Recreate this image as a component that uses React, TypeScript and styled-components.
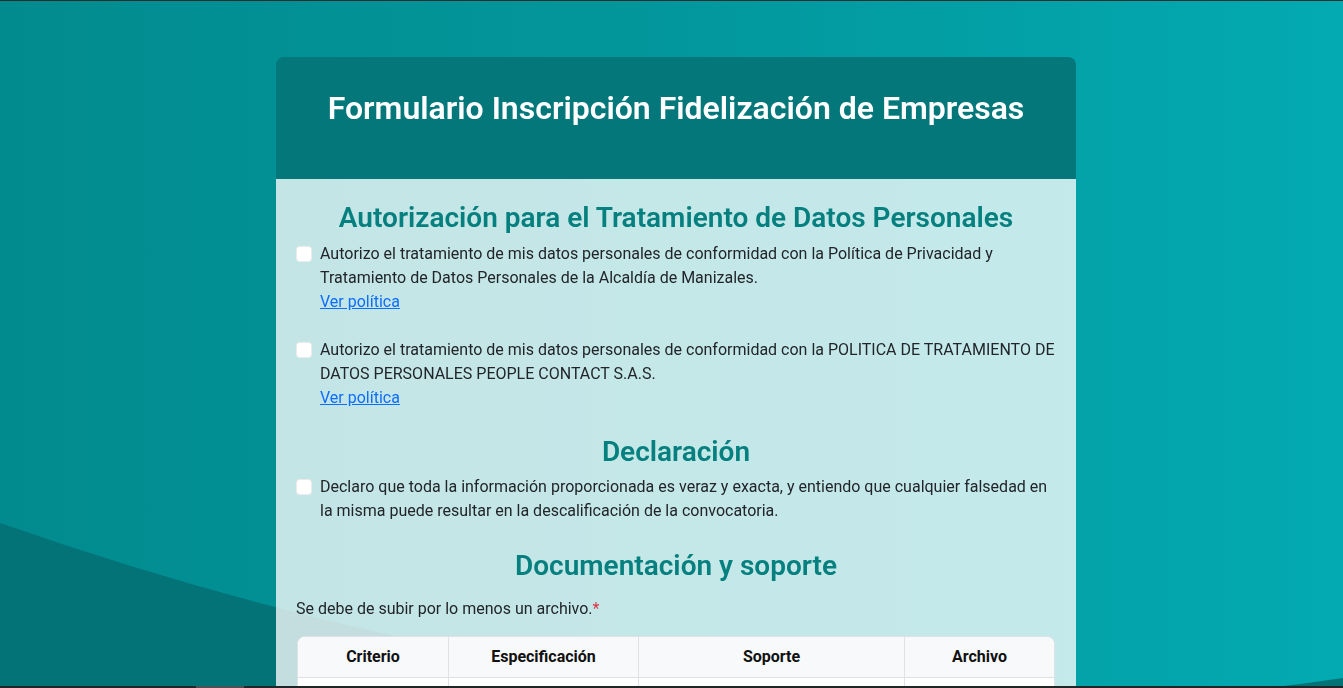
import React from "react";
import styled, { createGlobalStyle } from "styled-components";

const GlobalStyle = createGlobalStyle`
  *, *::before, *::after { box-sizing: border-box; }
  html, body { margin: 0; padding: 0; }
  body {
    font-family: Roboto, "Noto Sans", Arial, sans-serif;
    font-size: 16px;
    line-height: 1.5;
    color: #212529;
    background: linear-gradient(90deg, #028b8f 0%, #02979c 50%, #03aab1 100%);
    min-height: 100vh;
  }
`;

const Page = styled.div`
  position: relative;
  z-index: 1;
  display: flex;
  justify-content: center;
  padding: 56px 0 40px 9px;
  border-top: 1px solid #2b2d2e;
  min-height: 100vh;
`;

const Wave = styled.svg`
  position: fixed;
  inset: 0;
  width: 100%;
  height: 100%;
  z-index: 0;
  pointer-events: none;
`;

const BottomBar = styled.div`
  position: fixed;
  left: 0;
  right: 0;
  bottom: 0;
  height: 2px;
  background: #222526;
  z-index: 5;
`;

const BarThumb = styled.div`
  position: absolute;
  left: 196px;
  width: 48px;
  top: 0;
  bottom: 0;
  background: #4e5152;
`;

const Card = styled.div`
  width: 800px;
  border-radius: 8px;
  overflow: hidden;
  display: flex;
  flex-direction: column;
`;

const Header = styled.header`
  background: #04777b;
  padding: 32px 20px 52px;
`;

const Title = styled.h1`
  margin: 0;
  color: #ffffff;
  font-size: 32px;
  font-weight: 600;
  line-height: 38px;
  text-align: center;
`;

const Body = styled.main`
  display: flex;
  flex-direction: column;
  background: rgba(255, 255, 255, 0.77);
  padding: 21px 20px 40px;
  min-height: 700px;
`;

const SectionTitle = styled.h3<{ $top?: number; $gap?: number }>`
  margin: ${(p) => p.$top ?? 1}px 0 ${(p) => p.$gap ?? 7}px;
  color: #06807f;
  font-size: 28px;
  font-weight: 600;
  line-height: 1.2;
  text-align: center;
`;

const CheckItem = styled.div`
  display: flex;
  align-items: flex-start;
  gap: 8px;
  margin-bottom: 24px;
`;

const Box = styled.input`
  appearance: none;
  flex: 0 0 16px;
  width: 16px;
  height: 16px;
  margin: 4px 0 0 0;
  background: #ffffff;
  border: 1px solid rgba(0, 0, 0, 0.08);
  border-radius: 4px;
`;

const CheckText = styled.div`
  display: flex;
  flex-direction: column;
  align-items: flex-start;
`;

const Link = styled.a`
  color: #0d6efd;
  text-decoration: underline;
`;

const Note = styled.p`
  margin: 0 0 15px;
`;

const Required = styled.span`
  color: #dc3545;
`;

const Table = styled.div`
  display: grid;
  grid-template-columns: 151px 190px 266px 1fr;
  margin: 0 1px 0 1px;
  background: #ffffff;
  border: 1px solid #dee2e6;
  border-radius: 8px;
  overflow: hidden;
`;

const Th = styled.div<{ $last?: boolean }>`
  background: #f8f9fa;
  font-weight: 700;
  text-align: center;
  padding: 8px;
  color: #111;
  border-bottom: 1px solid #dee2e6;
  border-right: ${(p) => (p.$last ? "none" : "1px solid #dee2e6")};
`;

const Td = styled.div<{ $last?: boolean }>`
  min-height: 64px;
  padding: 8px;
  border-bottom: 1px solid #dee2e6;
  border-right: ${(p) => (p.$last ? "none" : "1px solid #dee2e6")};
`;

const headers = ["Criterio", "Especificación", "Soporte", "Archivo"];

export default function App() {
  return (
    <>
      <GlobalStyle />
      <Wave viewBox="0 0 1343 688" preserveAspectRatio="none">
        <path d="M0 523 Q713 772 1343 678 L1343 688 L0 688 Z" fill="#047378" />
      </Wave>
      <Page>
        <Card>
          <Header>
            <Title>Formulario Inscripción Fidelización de Empresas</Title>
          </Header>
          <Body>
            <SectionTitle>Autorización para el Tratamiento de Datos Personales</SectionTitle>
            <CheckItem>
              <Box type="checkbox" />
              <CheckText>
                <span>
                  Autorizo el tratamiento de mis datos personales de conformidad con la Política de Privacidad y
                  Tratamiento de Datos Personales de la Alcaldía de Manizales.
                </span>
                <Link href="#">Ver política</Link>
              </CheckText>
            </CheckItem>
            <CheckItem>
              <Box type="checkbox" />
              <CheckText>
                <span>
                  Autorizo el tratamiento de mis datos personales de conformidad con la POLITICA DE TRATAMIENTO DE
                  DATOS PERSONALES PEOPLE CONTACT S.A.S.
                </span>
                <Link href="#">Ver política</Link>
              </CheckText>
            </CheckItem>

            <SectionTitle>Declaración</SectionTitle>
            <CheckItem>
              <Box type="checkbox" />
              <CheckText>
                <span>
                  Declaro que toda la información proporcionada es veraz y exacta, y entiendo que cualquier falsedad en
                  la misma puede resultar en la descalificación de la convocatoria.
                </span>
              </CheckText>
            </CheckItem>

            <SectionTitle $top={2} $gap={14}>Documentación y soporte</SectionTitle>
            <Note>
              Se debe de subir por lo menos un archivo.<Required>*</Required>
            </Note>
            <Table>
              {headers.map((h, i) => (
                <Th key={h} $last={i === 3}>
                  {h}
                </Th>
              ))}
              {headers.map((h, i) => (
                <Td key={"c" + h} $last={i === 3} />
              ))}
            </Table>
          </Body>
        </Card>
      </Page>
      <BottomBar>
        <BarThumb />
      </BottomBar>
    </>
  );
}
